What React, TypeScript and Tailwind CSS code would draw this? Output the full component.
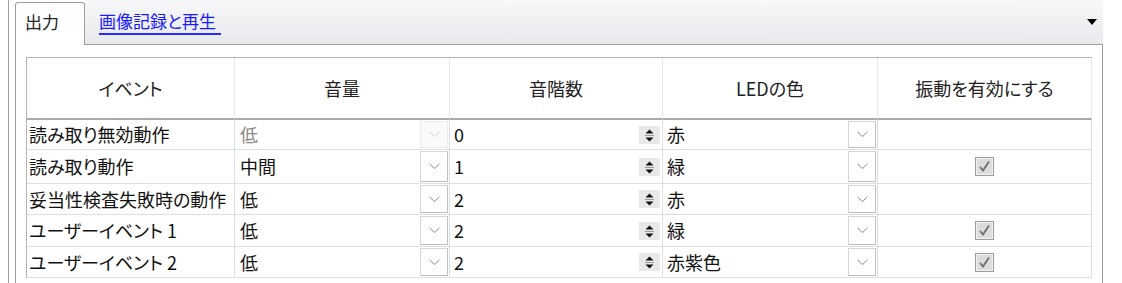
import React from "react";

type Row = {
  event: string;
  volume: string;
  steps: string;
  led: string;
  vibrate: boolean;
  disabled?: boolean;
  h: string;
};

const rows: Row[] = [
  { event: "読み取り無効動作", volume: "低", steps: "0", led: "赤", vibrate: false, disabled: true, h: "h-[30px]" },
  { event: "読み取り動作", volume: "中間", steps: "1", led: "緑", vibrate: true, h: "h-[34px]" },
  { event: "妥当性検査失敗時の動作", volume: "低", steps: "2", led: "赤", vibrate: false, h: "h-[31px]" },
  { event: "ユーザーイベント 1", volume: "低", steps: "2", led: "緑", vibrate: true, h: "h-[32px]" },
  { event: "ユーザーイベント 2", volume: "低", steps: "2", led: "赤紫色", vibrate: true, h: "h-[31px]" },
];

const headers = ["イベント", "音量", "音階数", "LEDの色", "振動を有効にする"];

function DropButton({ disabled }: { disabled?: boolean }) {
  return (
    <div
      className={
        disabled
          ? "my-[1px] mr-[1px] flex w-[28px] items-center justify-center self-stretch border border-[#ebebeb] bg-[#fafafa]"
          : "my-[1px] mr-[1px] flex w-[28px] items-center justify-center self-stretch border border-[#d6d6d6] border-r-[#c2c2c2] border-b-[#bdbdbd] bg-white"
      }
    >
      <svg width="11" height="7" viewBox="0 0 11 7">
        <polyline
          points="0.5,0.8 5.5,5.6 10.5,0.8"
          fill="none"
          stroke={disabled ? "#cfcfcf" : "#8a8a8a"}
          strokeWidth="1"
        />
      </svg>
    </div>
  );
}

function Spinner() {
  return (
    <svg width="21" height="18" viewBox="0 0 21 18" className="mr-[2px] shrink-0">
      <rect x="0" y="0" width="21" height="18" fill="#e8e8e8" />
      <polygon points="6.5,7.5 10.5,3.5 14.5,7.5" fill="#111" />
      <line x1="6" y1="9.5" x2="15" y2="9.5" stroke="#9a9a9a" strokeWidth="1" />
      <polygon points="6.5,11.5 10.5,15.5 14.5,11.5" fill="#111" />
    </svg>
  );
}

function CheckBox() {
  return (
    <svg width="19" height="19" viewBox="0 0 19 19">
      <rect x="0.5" y="0.5" width="18" height="18" fill="#e2e2e2" stroke="#9c9c9c" />
      <rect x="1.5" y="1.5" width="16" height="16" fill="#dcdcdc" stroke="#f2f2f2" />
      <path d="M5 10 L8 13.5 L14 4.5" fill="none" stroke="#6e6e6e" strokeWidth="1.8" />
    </svg>
  );
}

export default function App() {
  const cell = "flex items-center border-r border-b border-[#d8deea]";
  return (
    <div
      className="flex h-[283px] w-[1122px] overflow-hidden bg-white text-[#111] [font-family:'Noto_Sans_CJK_JP','Noto_Sans',sans-serif] [font-feature-settings:'palt']"
    >
      <div className="w-[8px] shrink-0" />
      <div className="w-px shrink-0 bg-[#a3a3a3]" />
      <div className="w-[6px] shrink-0" />

      <div className="flex w-[1088px] shrink-0 flex-col">
        {/* tab strip */}
        <div className="flex h-[45px] shrink-0">
          <div className="mt-[2px] flex h-[43px] w-[70px] items-center rounded-t-[3px] border-x border-t border-[#9e9e9e] bg-gradient-to-b from-[#fdfdfd] to-white pb-[4px] pl-[9px] text-[17px] text-[#222]">
            出力
          </div>
          <div className="flex flex-1 items-center border-b border-[#9e9e9e] bg-gradient-to-b from-[#f7f8f9] to-[#e7e9ec]">
            <span className="ml-[14px] mb-[1px] border-b-2 border-[#2b2bff] pr-[5px] text-[17px] leading-[24px] text-[#1a1aff]">
              画像記録と再生
            </span>
            <div className="flex-1" />
            <svg width="10" height="6" viewBox="0 0 10 6" className="mr-[6px] mb-[1px]">
              <polygon points="0,0 10,0 5,6" fill="#000" />
            </svg>
          </div>
        </div>

        {/* panel */}
        <div className="flex-1 border-x border-[#9e9e9e] px-[10px] pt-[12px]">
          <div className="border-t border-l border-[#b3b3b3]">
            <div className="grid grid-cols-[208px_215px_213px_215px_214px] text-[18px]">
              {headers.map((h) => (
                <div
                  key={h}
                  className="flex h-[62px] items-center justify-center border-r border-b-2 border-r-[#e4e7ee] border-b-[#aaaaaa] text-[#222]"
                >
                  {h}
                </div>
              ))}

              {rows.map((r) => (
                <React.Fragment key={r.event}>
                  <div className={`${cell} ${r.h} pl-[2px] whitespace-nowrap`}>{r.event}</div>
                  <div className={`${cell} ${r.h} pl-[5px]`}>
                    <span className={r.disabled ? "flex-1 text-[#8a8a8a]" : "flex-1"}>{r.volume}</span>
                    <DropButton disabled={r.disabled} />
                  </div>
                  <div className={`${cell} ${r.h} pl-[4px]`}>
                    <span className="flex-1">{r.steps}</span>
                    <Spinner />
                  </div>
                  <div className={`${cell} ${r.h} pl-[4px]`}>
                    <span className="flex-1">{r.led}</span>
                    <DropButton />
                  </div>
                  <div className={`${cell} ${r.h} justify-center`}>{r.vibrate && <CheckBox />}</div>
                </React.Fragment>
              ))}
            </div>
          </div>
        </div>
      </div>
    </div>
  );
}
